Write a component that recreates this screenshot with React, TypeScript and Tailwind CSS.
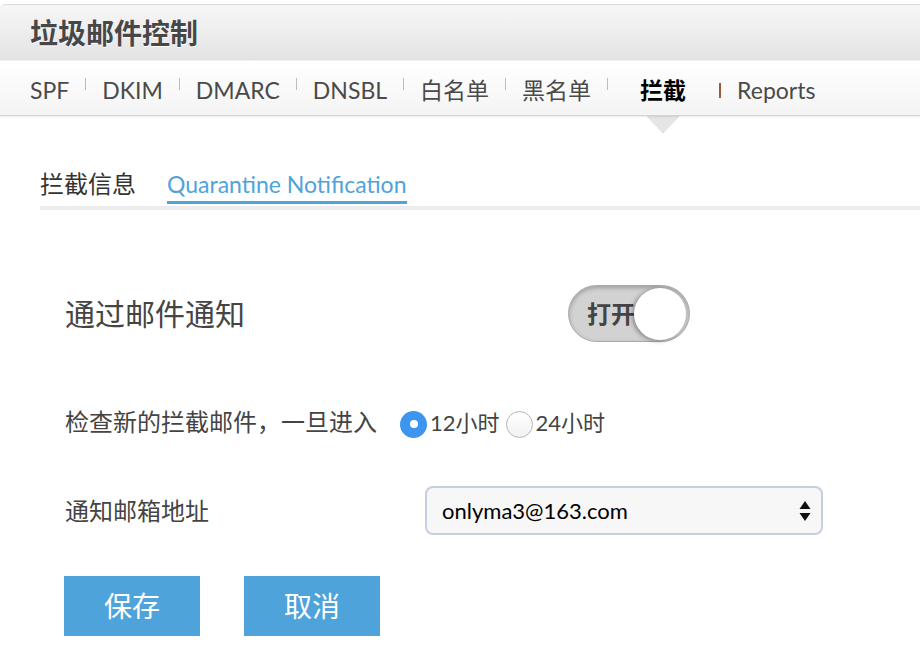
import { useState } from "react"

const NAV = ["SPF", "DKIM", "DMARC", "DNSBL", "白名单", "黑名单"]

export default function App() {
  const [period, setPeriod] = useState("12")
  const [on, setOn] = useState(true)

  return (
    <div className="w-[920px] h-[662px] bg-white overflow-hidden font-['Lato','Noto_Sans_CJK_SC',sans-serif] text-[#444]">
      {/* Title bar */}
      <div className="mt-1 h-[56px] border-t border-[#d9d9d9] rounded-tl-md bg-gradient-to-b from-[#f7f7f7] to-[#e3e3e3] flex items-center pl-[30px]">
        <h1 className="text-[28px] font-bold text-[#474747] [text-shadow:0_1px_0_#fff]">垃圾邮件控制</h1>
      </div>

      {/* Nav */}
      <div className="relative h-[56px] pt-1 border-t border-[#f0f0f0] border-b border-b-[#d4d4d4] bg-gradient-to-b from-white to-[#f4f4f4] shadow-[0_1px_2px_rgba(0,0,0,0.08)] flex items-center pl-[30px] text-[23px] text-[#4a4a4a]">
        {NAV.map((item) => (
          <div key={item} className="flex items-center">
            <span>{item}</span>
            <span className="mx-4 mb-3 h-[12px] w-px bg-[#bdbdbd]" />
          </div>
        ))}
        <span className="ml-[16px] w-[47px] font-bold text-black">拦截</span>
        <span className="ml-[32px] mr-4 h-[15px] w-[2px] bg-[#9b5a3c]" />
        <span>Reports</span>
      </div>
      <div className="pl-[647px] h-[20px]">
        <svg width="32" height="18" viewBox="0 0 32 18">
          <path d="M0 0 L16 17 L32 0 Z" fill="#e6e6e6" stroke="#dcdcdc" strokeWidth="1" />
        </svg>
      </div>

      {/* Sub tabs */}
      <div className="ml-10 mt-[33px] border-b-4 border-[#ececec] flex items-end gap-[31px]">
        <div className="pb-[5px] mb-[2px] text-[24px] leading-[30px] text-[#333]">拦截信息</div>
        <div className="pb-[3px] mb-[2px] text-[23px] leading-[28px] text-[#4fa3db] border-b-[3px] border-[#4fa3db]">
          Quarantine Notification
        </div>
      </div>

      {/* Form */}
      <div className="pl-[65px]">
        <div className="mt-[75px] flex items-center h-[57px]">
          <div className="w-[503px] text-[30px] text-[#444]">通过邮件通知</div>
          <button
            onClick={() => setOn(!on)}
            className="relative w-[122px] h-[57px] rounded-full bg-[#d2d2d2] border border-[#a9a9a9] shadow-[inset_0_2px_4px_rgba(0,0,0,0.25)] flex items-center"
          >
            <span className="pl-[18px] text-[24px] text-[#444] font-semibold whitespace-nowrap">打开</span>
            <span className="absolute right-[3px] top-[2px] w-[52px] h-[52px] rounded-full bg-white shadow-[-2px_1px_4px_rgba(0,0,0,0.35)]" />
          </button>
        </div>

        <div className="mt-[62px] flex items-center text-[22px] text-[#444]">
          <span className="w-[335px] text-[24px]">检查新的拦截邮件，一旦进入</span>
          <label className="flex items-center cursor-pointer" onClick={() => setPeriod("12")}>
            <span className={period === "12" ? "mt-1 w-[27px] h-[27px] rounded-full bg-[#3e95ef] flex items-center justify-center" : "mt-1 w-[27px] h-[27px] rounded-full border border-[#b5b5b5] bg-gradient-to-b from-white to-[#f1f1f1]"}>
              {period === "12" && <span className="w-[8px] h-[8px] rounded-full bg-white" />}
            </span>
            <span className="ml-[3px]">12小时</span>
          </label>
          <label className="ml-[6px] flex items-center cursor-pointer" onClick={() => setPeriod("24")}>
            <span className={period === "24" ? "mt-1 w-[27px] h-[27px] rounded-full bg-[#3e95ef] flex items-center justify-center" : "mt-1 w-[27px] h-[27px] rounded-full border border-[#b5b5b5] bg-gradient-to-b from-white to-[#f1f1f1]"}>
              {period === "24" && <span className="w-[8px] h-[8px] rounded-full bg-white" />}
            </span>
            <span className="ml-[3px]">24小时</span>
          </label>
        </div>

        <div className="mt-[46px] flex items-center">
          <span className="w-[360px] text-[24px] text-[#444]">通知邮箱地址</span>
          <div className="w-[398px] h-[49px] rounded-lg border-2 border-[#c6cfdf] bg-[#f7f7f7] flex items-center justify-between pl-[15px] pr-[10px]">
            <span className="text-[22px] text-black">onlyma3@163.com</span>
            <svg width="12" height="22" viewBox="0 0 12 22">
              <path d="M6 1 L11.5 9 L0.5 9 Z" fill="#111" />
              <path d="M0.5 13 L11.5 13 L6 21 Z" fill="#111" />
            </svg>
          </div>
        </div>

        <div className="mt-[41px] flex gap-[44px] -ml-px">
          <button className="w-[136px] h-[60px] bg-[#4fa3db] text-white text-[28px]">保存</button>
          <button className="w-[136px] h-[60px] bg-[#4fa3db] text-white text-[28px]">取消</button>
        </div>
      </div>
    </div>
  )
}
